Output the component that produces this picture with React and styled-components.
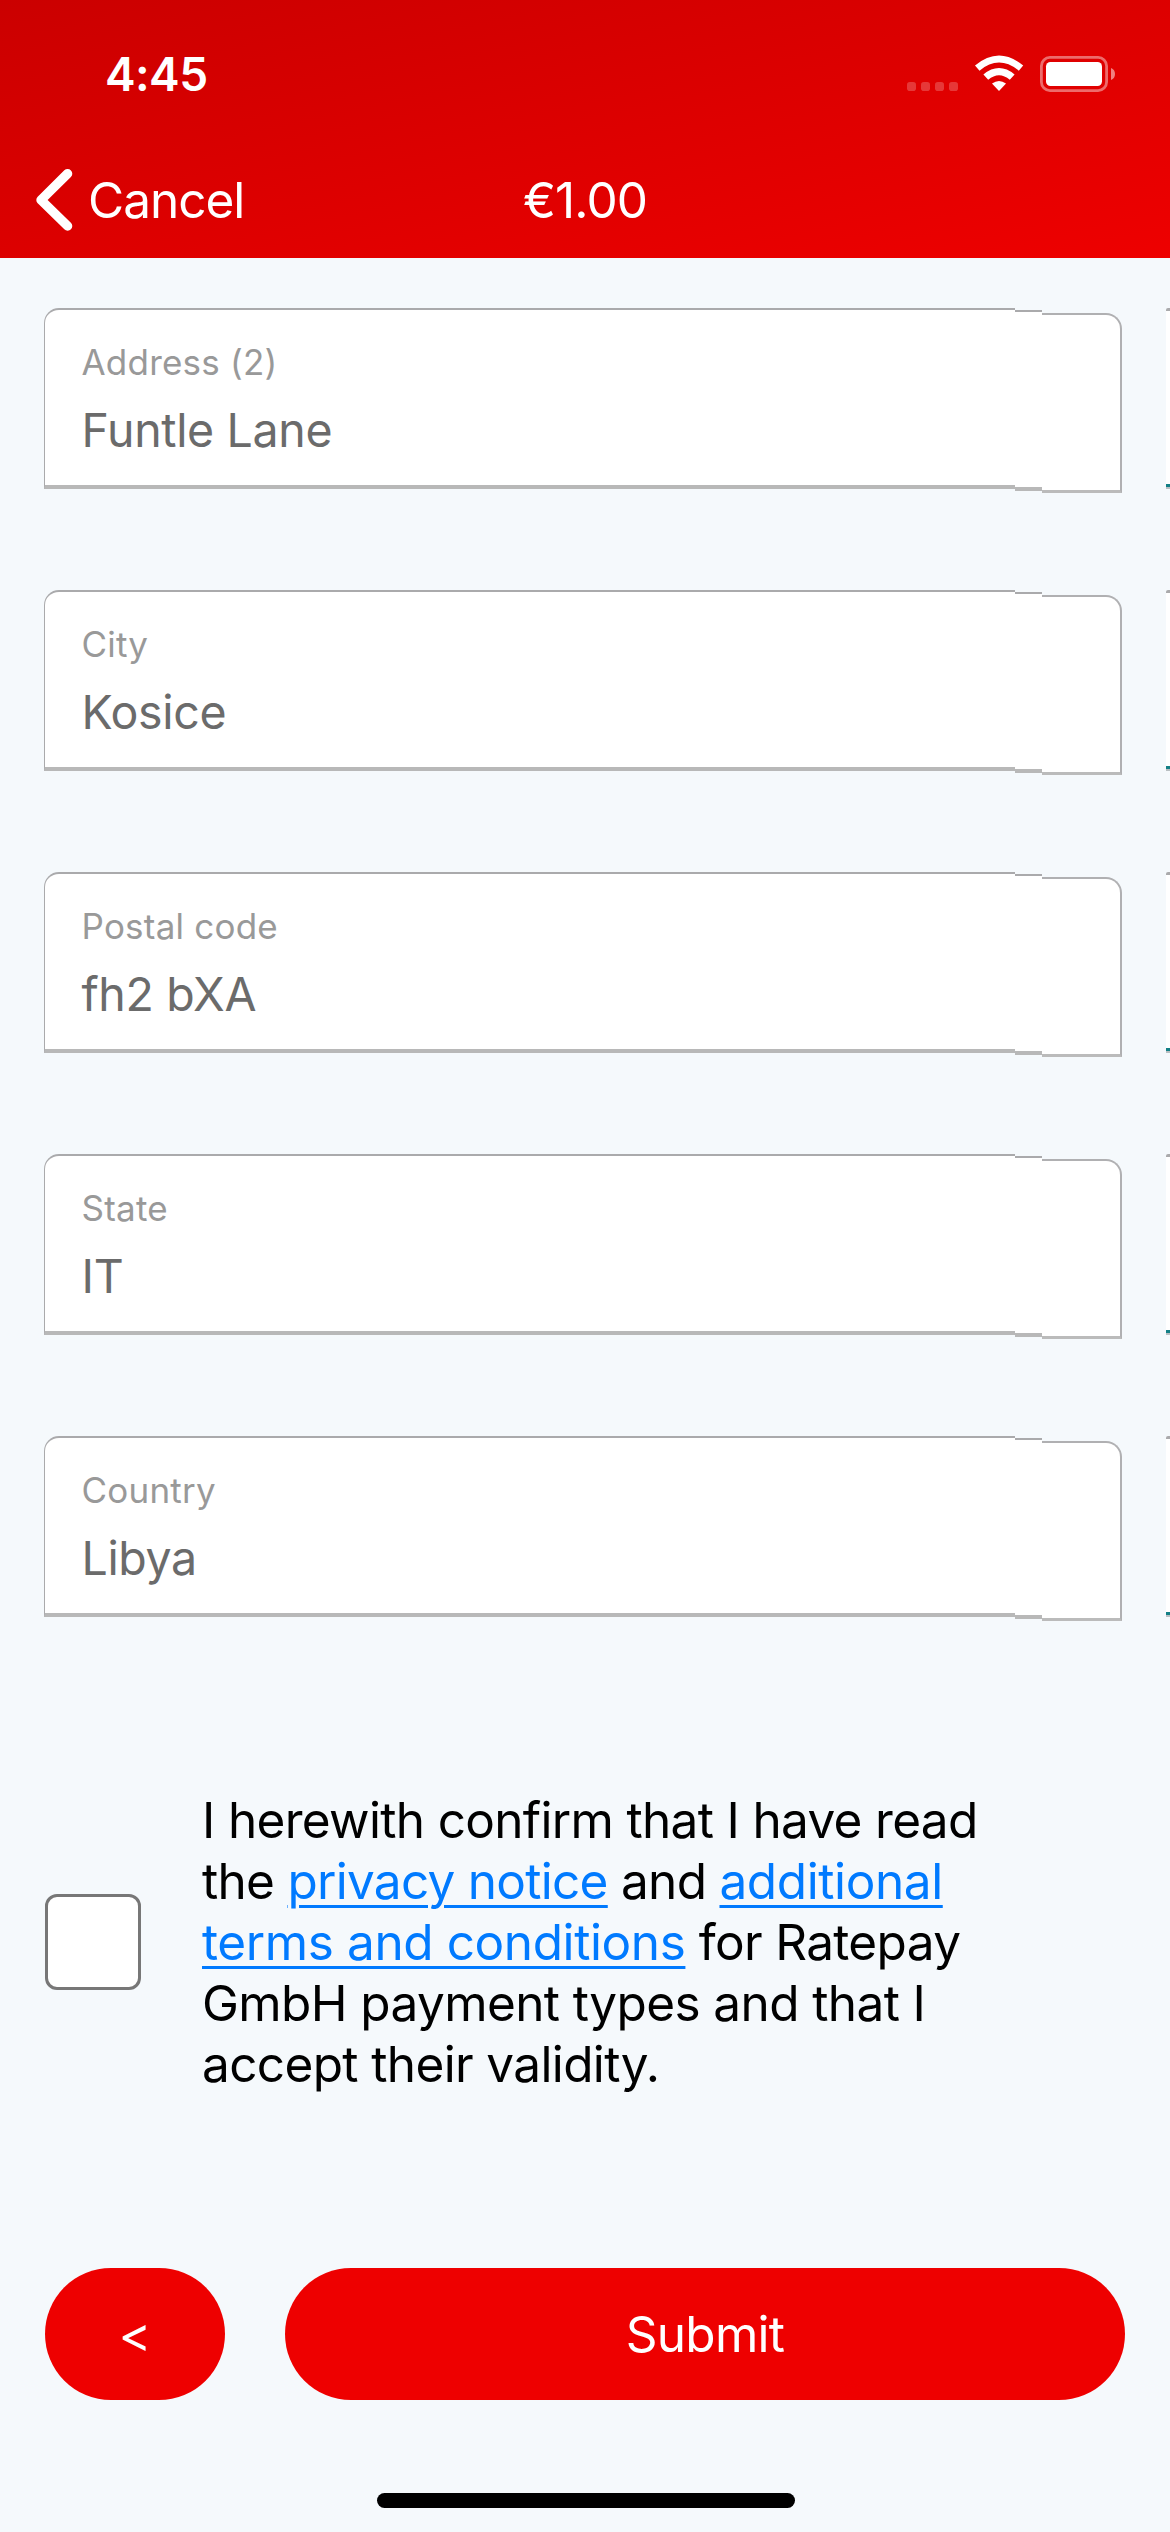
import React from "react";
import styled, { createGlobalStyle } from "styled-components";

const Global = createGlobalStyle`
  * { box-sizing: border-box; }
  body { margin: 0; background: #f5f9fc; }
`;

const Screen = styled.main`
  width: 1170px;
  height: 2532px;
  display: flex;
  flex-direction: column;
  overflow: hidden;
  background: #f5f9fc;
  font-family: Inter, "Liberation Sans", sans-serif;
  color: #000;
`;

const Header = styled.header`
  height: 258px;
  flex: none;
  background: linear-gradient(to bottom right, #cb0000, #ee0000);
  color: #fff;
`;

const StatusBar = styled.div`
  height: 141px;
  padding: 7px 54px 0 105px;
  display: flex;
  align-items: center;
  justify-content: space-between;
`;

const Clock = styled.span`
  font-size: 46px;
  font-weight: 600;
  line-height: 60px;
  letter-spacing: -0.6px;
`;

const NavBar = styled.nav`
  height: 117px;
  padding: 0 36px;
  display: grid;
  grid-template-columns: 1fr auto 1fr;
  align-items: center;
`;

const BackLink = styled.button`
  border: 0;
  padding: 0;
  background: none;
  color: inherit;
  font: inherit;
  display: flex;
  align-items: center;
  gap: 15px;
`;

const NavText = styled.span`
  font-size: 49.5px;
  line-height: 62px;
  letter-spacing: ${(p) => p.$track}px;
`;

const Form = styled.section`
  padding-top: 50px;
  display: flex;
  flex-direction: column;
  gap: 100px;
`;

const FieldRow = styled.div`
  height: 182px;
  padding-left: 44px;
  display: flex;
  align-items: flex-start;
`;

const FieldMain = styled.label`
  width: 971px;
  height: 181px;
  padding: 30px 0 0 36.5px;
  display: flex;
  flex-direction: column;
  background: #fff;
  border: solid #aaaaac;
  border-width: 2px 0 4px 1.5px;
  border-bottom-color: #b8b8b8;
  border-top-left-radius: 15px;
`;

const FieldStep = styled.span`
  width: 27px;
  height: 181px;
  margin-top: 2px;
  background: #fff;
  border-top: 2px solid #aaaaac;
  border-bottom: 4px solid #b8b8b8;
`;

const FieldEnd = styled.span`
  width: 80px;
  height: 180px;
  margin-top: 5px;
  background: #fff;
  border: solid #b0b0b2;
  border-width: 2px 2px 3px 0;
  border-bottom-color: #bbbbbb;
  border-top-right-radius: 16px;
`;

const NextSlide = styled.span`
  width: 4px;
  height: 179px;
  margin-left: 44px;
  background: #fff;
  border-top: 3px solid #aaaaac;
  border-bottom: 3px solid #138086;
  border-top-left-radius: 2px;
  box-shadow: 0 2px 0 #b9bfc2;
`;

const Label = styled.span`
  font-size: 35px;
  line-height: 44px;
  color: #999999;
  letter-spacing: 0.22px;
`;

const Value = styled.span`
  margin-top: 17px;
  font-size: 46.5px;
  line-height: 58px;
  color: #6b6b6b;
  letter-spacing: -0.35px;
`;

const Consent = styled.section`
  margin-top: 171px;
  height: 306px;
  padding-left: 45px;
  display: flex;
  align-items: center;
  gap: 61px;
`;

const Checkbox = styled.span`
  width: 96px;
  height: 96px;
  background: #fff;
  border: 3px solid #777;
  border-radius: 12px;
`;

const ConsentText = styled.p`
  margin: 0;
  font-size: 49.5px;
  line-height: 61px;
`;

const Line = styled.span`
  display: block;
  white-space: nowrap;
  letter-spacing: ${(p) => p.$track}px;
`;

const Link = styled.a`
  color: #007aff;
  letter-spacing: ${(p) => p.$track}px;
  text-decoration: underline;
  text-decoration-thickness: 3px;
  text-underline-offset: 6px;
`;

const Actions = styled.section`
  margin-top: 173px;
  padding: 0 45px;
  display: flex;
  gap: 60px;
`;

const Button = styled.button`
  flex: ${(p) => (p.$wide ? "1" : "0 0 180px")};
  height: 132px;
  padding: 0;
  border: 0;
  border-radius: 66px;
  background: #ee0000;
  color: #fff;
  font-family: inherit;
  font-size: 49.5px;
  letter-spacing: ${(p) => p.$track}px;
`;

const HomeIndicator = styled.div`
  width: 418px;
  height: 15px;
  margin: 93px 0 0 377px;
  border-radius: 8px;
  background: #000;
`;

const FIELDS = [
  { label: "Address (2)", value: "Funtle Lane" },
  { label: "City", value: "Kosice" },
  { label: "Postal code", value: "fh2 bXA" },
  { label: "State", value: "IT" },
  { label: "Country", value: "Libya" },
];

function StatusIcons() {
  return (
    <svg width="209" height="38" viewBox="907 55 209 38" fill="#fff">
      {[907, 921, 935, 949].map((x) => (
        <rect key={x} x={x} y="82" width="9" height="9" rx="2.8" opacity=".22" />
      ))}
      <path d="M975 65.5 Q999 45.5 1023.2 65.5 L1018.8 70.7 Q999 54.5 979.5 70.7 Z" />
      <path d="M983.4 74.5 Q999 61.7 1014.6 74.5 L1009.8 79.7 Q999 70.7 988.2 79.7 Z" />
      <path d="M992 83.4 Q999 78.4 1006 83.4 L999 91 Z" />
      <rect x="1041.4" y="57.4" width="65.2" height="33.2" rx="8.5" fill="none" stroke="#fff" strokeWidth="2.8" opacity=".42" />
      <rect x="1046" y="62" width="56" height="24" rx="4.5" />
      <path d="M1111 68 Q1115 69.5 1115 74 Q1115 78.500 1111 80 Z" opacity=".5" />
    </svg>
  );
}

export default function App() {
  return (
    <Screen>
      <Global />
      <Header>
        <StatusBar>
          <Clock>4:45</Clock>
          <StatusIcons />
        </StatusBar>
        <NavBar>
          <BackLink>
            <svg width="37" height="62" viewBox="0 0 37 62">
              <path d="M31.600 4.700 L5 31 L31.600 57" fill="none" stroke="#fff" strokeWidth="9.400" strokeLinecap="round" strokeLinejoin="round" />
            </svg>
            <NavText $track={-1}>Cancel</NavText>
          </BackLink>
          <NavText $track={-0.9}>€1.00</NavText>
        </NavBar>
      </Header>
      <Form>
        {FIELDS.map((f) => (
          <FieldRow key={f.label}>
            <FieldMain>
              <Label>{f.label}</Label>
              <Value>{f.value}</Value>
            </FieldMain>
            <FieldStep />
            <FieldEnd />
            <NextSlide />
          </FieldRow>
        ))}
      </Form>
      <Consent>
        <Checkbox role="checkbox" aria-checked="false" />
        <ConsentText>
          <Line $track={-0.67}>I herewith confirm that I have read</Line>
          <Line $track={-0.7}>the <Link $track={-0.72}>privacy notice</Link> and <Link $track={-0.4}>additional</Link></Line>
          <Line $track={-0.65}><Link $track={-0.4}>terms and conditions</Link> for Ratepay</Line>
          <Line $track={-0.6}>GmbH payment types and that I</Line>
          <Line $track={-0.63}>accept their validity.</Line>
        </ConsentText>
      </Consent>
      <Actions>
        <Button $track={0}>&lt;</Button>
        <Button $wide $track={-0.7}>Submit</Button>
      </Actions>
      <HomeIndicator />
    </Screen>
  );
}
